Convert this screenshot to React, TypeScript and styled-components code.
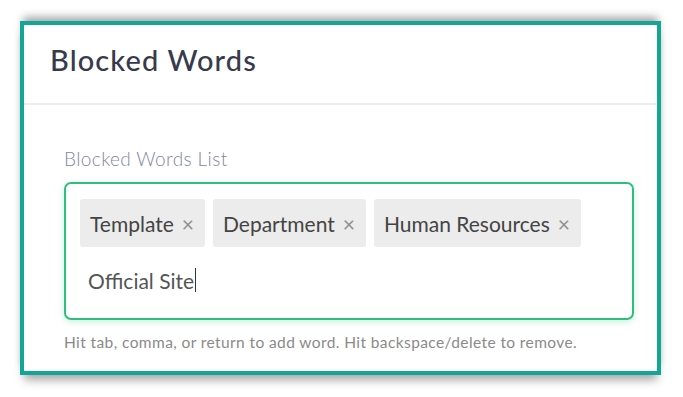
import * as React from 'react';
import styled, {createGlobalStyle} from 'styled-components';

const GlobalStyle = createGlobalStyle`
	html, body {
		margin: 0;
		padding: 0;
		background: #ffffff;
		font-family: Lato, "Open Sans", sans-serif;
	}
`;

const Page = styled.div`
	padding: 21px 22px 0 20px;
	width: 683px;
	height: 397px;
	box-sizing: border-box;
`;

const Card = styled.div`
	width: 641px;
	height: 354px;
	box-sizing: border-box;
	border: 4px solid #13a596;
	background: #ffffff;
	box-shadow: 0 -7px 8px -3px rgba(0, 0, 0, 0.35), 0 9px 9px -4px rgba(0, 0, 0, 0.35);
	display: flex;
	flex-direction: column;
`;

const Header = styled.div`
	height: 80px;
	padding: 0 26px 10px;
	box-sizing: border-box;
	display: flex;
	align-items: center;
	border-bottom: 2px solid #ececf1;
`;

const Title = styled.h1`
	margin: 0;
	font-size: 29px;
	font-weight: 500;
	color: #373a4d;
	letter-spacing: 1.1px;
`;

const Body = styled.div`
	padding: 43px 23px 0 40px;
	display: flex;
	flex-direction: column;
`;

const Label = styled.div`
	font-size: 19px;
	font-weight: 300;
	color: #7f86a3;
	letter-spacing: 0.4px;
	margin-bottom: 12px;
	line-height: 22px;
`;

const WordBox = styled.div`
	height: 138px;
	box-sizing: border-box;
	border: 2px solid #2fbf7d;
	border-radius: 7px;
	box-shadow: 0 2px 6px rgba(47, 191, 125, 0.25);
	padding: 15px 14px;
	display: flex;
	flex-wrap: wrap;
	align-content: flex-start;
	gap: 8px 8px;
`;

const Tag = styled.div`
	height: 48px;
	padding: 0 11px 0 10px;
	background: #ececec;
	border-radius: 3px;
	display: flex;
	align-items: center;
	gap: 8px;
	font-size: 21px;
	color: #444444;
`;

const Remove = styled.span`
	font-size: 21px;
	color: #8f8f8f;
	line-height: 1;
`;

const Entry = styled.div`
	width: 100%;
	height: 50px;
	padding-left: 8px;
	display: flex;
	align-items: center;
	font-size: 21px;
	color: #555555;
`;

const Caret = styled.span`
	display: inline-block;
	width: 1px;
	height: 24px;
	background: #333333;
	margin-left: 1px;
`;

const Hint = styled.div`
	margin-top: 13px;
	font-size: 15.5px;
	letter-spacing: 0.4px;
	color: #8a8a8a;
`;

const words = ['Template', 'Department', 'Human Resources'];

const App = () => {
	return (
		<Page>
			<GlobalStyle />
			<Card>
				<Header>
					<Title>Blocked Words</Title>
				</Header>
				<Body>
					<Label>Blocked Words List</Label>
					<WordBox>
						{words.map(w => (
							<Tag key={w}>
								{w}
								<Remove>×</Remove>
							</Tag>
						))}
						<Entry>
							Official Site<Caret />
						</Entry>
					</WordBox>
					<Hint>Hit tab, comma, or return to add word. Hit backspace/delete to remove.</Hint>
				</Body>
			</Card>
		</Page>
	);
};

export default App;
